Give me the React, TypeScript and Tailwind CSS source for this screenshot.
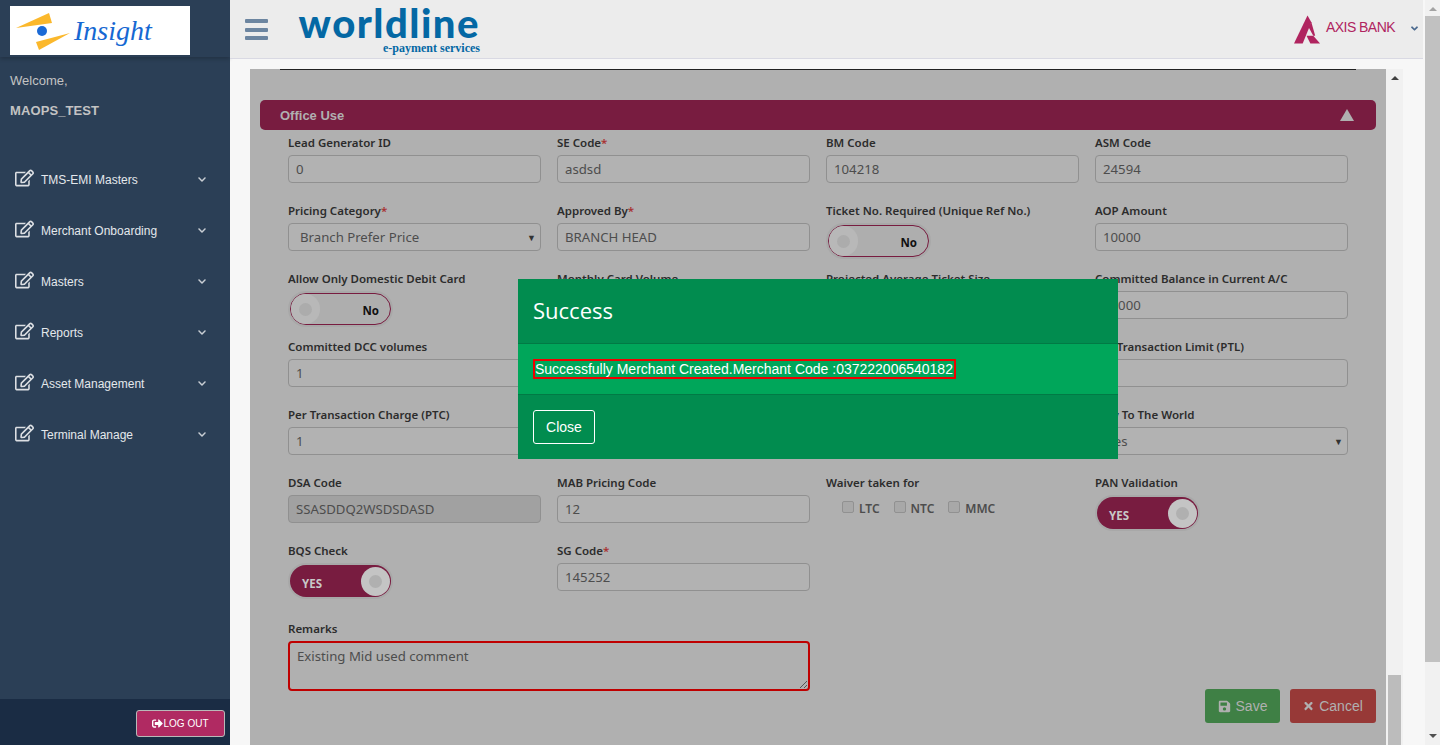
import { FaAngleDown, FaChevronDown, FaRegEdit, FaSave, FaSignOutAlt, FaTimes } from "react-icons/fa";

const navItems = ["TMS-EMI Masters", "Merchant Onboarding", "Masters", "Reports", "Asset Management", "Terminal Manage"];

function Label({ text, required }: { text: string; required?: boolean }) {
  return (
    <label className="block h-[18px] text-[11.5px] leading-[12px] font-semibold text-[#2c2c2c] whitespace-nowrap">
      {text}
      {required && <span className="text-[#a83232]">*</span>}
    </label>
  );
}

function Field({ label, value, required, disabled }: { label: string; value?: string; required?: boolean; disabled?: boolean }) {
  return (
    <div className="h-[68px]">
      <Label text={label} required={required} />
      <div
        className={`flex h-[28px] items-center rounded-[4px] border border-[#909090] px-[7px] pt-[1px] text-[13.2px] text-[#4d4d4d] ${disabled ? "bg-[#a1a1a1]" : "bg-[#b2b2b2]"}`}
      >
        {value}
      </div>
    </div>
  );
}

function SelectField({ label, value, required }: { label: string; value: string; required?: boolean }) {
  return (
    <div className="h-[68px]">
      <Label text={label} required={required} />
      <div className="flex h-[28px] items-center justify-between rounded-[4px] border border-[#909090] bg-[#b2b2b2] pt-[1px] pl-[11px] pr-[4px] text-[13.2px] text-[#4d4d4d]">
        <span>{value}</span>
        <span className="text-[9px] text-[#333]">▼</span>
      </div>
    </div>
  );
}

function Toggle({ on }: { on: boolean }) {
  return (
    <div className="inline-flex h-[36px] w-[105px] rounded-full bg-[#a8a8a8] p-[2px]">
      {on ? (
        <div className="flex h-full w-full items-center justify-between rounded-full bg-[#781c40] pl-[12px] pr-[1px]">
          <span className="mt-[5px] text-[11.5px] font-bold text-[#c8c8c8]">YES</span>
          <span className="flex h-[29px] w-[29px] items-center justify-center rounded-full bg-[#c4c4c4]">
            <span className="h-[13px] w-[13px] rounded-full bg-[#b0b0b0]" />
          </span>
        </div>
      ) : (
        <div className="flex h-full w-full items-center justify-between rounded-full border border-[#781c40] bg-[#aeaeae] pr-[11px]">
          <span className="flex h-[30px] w-[29px] items-center justify-center rounded-full bg-[#b8b8b8]">
            <span className="h-[13px] w-[13px] rounded-full bg-[#acacac]" />
          </span>
          <span className="mt-[3px] text-[11.5px] font-bold text-[#111]">No</span>
        </div>
      )}
    </div>
  );
}

function ToggleField({ label, on }: { label: string; on: boolean }) {
  return (
    <div className="h-[68px]">
      <Label text={label} />
      <Toggle on={on} />
    </div>
  );
}

function Waiver() {
  return (
    <div className="h-[68px]">
      <Label text="Waiver taken for" />
      <div className="flex items-center gap-[14px] pl-[16px] pt-[5px]">
        {["LTC", "NTC", "MMC"].map((c) => (
          <span key={c} className="flex items-center gap-[5px] text-[12px] font-semibold text-[#4d4d4d]">
            <span className="mb-[4px] h-[12px] w-[12px] rounded-[2px] border border-[#919191] bg-[#a8a8a8]" />
            {c}
          </span>
        ))}
      </div>
    </div>
  );
}

function Sidebar() {
  return (
    <aside className="flex h-full w-[230px] shrink-0 flex-col bg-[#2b3f56] font-['Liberation_Sans',sans-serif]">
      <div className="h-[57px] pl-[10px] pt-[6px] shadow-[0_2px_4px_rgba(0,0,0,0.2)]">
        <div className="flex h-[49px] w-[180px] items-center bg-white pl-[4px]">
          <svg width="60" height="49" viewBox="0 0 60 49">
            <path d="M2 22 L35 7 L38 17 Z" fill="#fbb82c" />
            <path d="M22 36 L56 27 L25 44 Z" fill="#fbb82c" />
            <circle cx="28" cy="25" r="5" fill="#1b6ad6" />
          </svg>
          <span className="font-['Liberation_Serif',serif] text-[28px] italic leading-none text-[#1668d2]">Insight</span>
        </div>
      </div>
      <div className="pl-[10px] pt-[16px] text-[13px] leading-[16px] text-[#c3c3c3]">Welcome,</div>
      <div className="pl-[10px] pt-[14px] text-[13px] leading-[16px] font-bold tracking-[0.1px] text-[#c3c3c3]">MAOPS_TEST</div>
      <nav className="flex flex-1 flex-col pt-[35px]">
        {navItems.map((item) => (
          <div key={item} className="flex h-[51px] items-center pl-[15px] pr-[23px] text-[12px] text-[#e4e8ec]">
            <FaRegEdit className="mb-[3px] h-[18px] w-[19px] text-[#dcdfe3]" />
            <span className="ml-[7px] flex-1">{item}</span>
            <FaChevronDown className="h-[9px] w-[10px] text-[#c9ced4]" />
          </div>
        ))}
      </nav>
      <div className="flex h-[46px] items-start justify-end bg-[#1a2c44] pr-[5px] pt-[11px]">
        <button className="flex h-[27px] w-[89px] items-center justify-center rounded-[3px] border border-[#b9b9b9] bg-[#b02a62] text-[10px] text-white">
          <FaSignOutAlt className="h-[11px] w-[11px]" />
          LOG OUT
        </button>
      </div>
    </aside>
  );
}

function Header() {
  return (
    <header className="flex h-[59px] shrink-0 items-start border-b border-[#d9d9e3] bg-[#ececec] font-['Liberation_Sans',sans-serif]">
      <div className="ml-[15px] mt-[19px] flex w-[23px] flex-col gap-[4.5px]">
        <span className="h-[4px] rounded-[1px] bg-[#6c85a0]" />
        <span className="h-[4px] rounded-[1px] bg-[#6c85a0]" />
        <span className="h-[4px] rounded-[1px] bg-[#6c85a0]" />
      </div>
      <div className="ml-[32px] flex w-[180px] flex-col items-end">
        <span className="mt-[4px] font-['Lato',sans-serif] text-[40px] font-black leading-[38px] tracking-[1.5px] text-[#0468a4]">worldline</span>
        <span className="font-['Liberation_Serif',serif] text-[12px] font-bold leading-[12px] text-[#0468a4]">e-payment services</span>
      </div>
      <div className="ml-auto mr-[4px] mt-[14px] flex items-center">
        <svg width="27" height="30" viewBox="0 0 28 30">
          <path d="M0 30 L14 1 L18 8 L9 30 Z" fill="#b0245f" />
          <path d="M13 22 L20 22 L27 30 L17 30 Z" fill="#b0245f" />
          <path d="M15 13 L18 8 L22 22 L20 22 Z" fill="#b0245f" />
        </svg>
        <span className="mb-[3px] ml-[5px] text-[14px] tracking-[-0.55px] text-[#b0245f]">AXIS BANK</span>
        <FaAngleDown className="mb-[2px] ml-[15px] h-[11px] w-[9px] text-[#4c6a8f]" />
      </div>
    </header>
  );
}

function Form() {
  return (
    <div className="relative min-w-0 flex-1 bg-[#b0b0b0] font-['Noto_Sans',sans-serif]">
      <div className="mx-[30px] h-[1px] bg-[#222]" />
      <div className="mx-[10px] mt-[30px] flex h-[30px] items-center justify-between rounded-[5px] bg-[#781c40] pl-[20px] pr-[22px]">
        <span className="mt-[1px] font-['Liberation_Sans',sans-serif] text-[13px] font-bold text-[#b0b0b0]">Office Use</span>
        <span className="h-0 w-0 border-x-[7px] border-b-[12px] border-x-transparent border-b-[#b0b0b0]" />
      </div>
      <div className="grid grid-cols-[253px_253px_253px_253px] gap-x-4 pl-[38px] pt-[7px]">
        <Field label="Lead Generator ID" value="0" />
        <Field label="SE Code" value="asdsd" required />
        <Field label="BM Code" value="104218" />
        <Field label="ASM Code" value="24594" />

        <SelectField label="Pricing Category" value="Branch Prefer Price" required />
        <Field label="Approved By" value="BRANCH HEAD" required />
        <ToggleField label="Ticket No. Required (Unique Ref No.)" on={false} />
        <Field label="AOP Amount" value="10000" />

        <ToggleField label="Allow Only Domestic Debit Card" on={false} />
        <Field label="Monthly Card Volume" />
        <Field label="Projected Average Ticket Size" />
        <Field label="Committed Balance in Current A/C" value="10000" />

        <Field label="Committed DCC volumes" value="1" />
        <Field label="" />
        <Field label="" />
        <Field label="Per Transaction Limit (PTL)" />

        <Field label="Per Transaction Charge (PTC)" value="1" />
        <Field label="" />
        <Field label="" />
        <SelectField label="Way To The World" value="Yes" />

        <Field label="DSA Code" value="SSASDDQ2WSDSDASD" disabled />
        <Field label="MAB Pricing Code" value="12" />
        <Waiver />
        <ToggleField label="PAN Validation" on />

        <ToggleField label="BQS Check" on />
        <Field label="SG Code" value="145252" required />
      </div>
      <div className="flex items-start pl-[38px] pr-[10px] pt-[10px]">
        <div className="w-[522px]">
          <Label text="Remarks" />
          <div className="relative h-[50px] rounded-[4px] border-2 border-[#bf0000] px-[7px] pt-[4px] text-[13.2px] text-[#4d4d4d]">
            Existing Mid used comment
            <svg className="absolute bottom-0 right-0" width="9" height="9" viewBox="0 0 9 9">
              <path d="M1 8 L8 1 M5 8 L8 5" stroke="#555" strokeWidth="1" />
            </svg>
          </div>
        </div>
        <div className="ml-auto mt-[66px] flex gap-[10px] font-['Liberation_Sans',sans-serif] text-[14px] text-[#b0b0b0]">
          <button className="flex h-[34px] w-[75px] items-center justify-center gap-[5px] rounded-[3px] bg-[#3f8045]">
            <FaSave className="h-[13px] w-[13px]" />
            Save
          </button>
          <button className="flex h-[34px] w-[86px] items-center justify-center gap-[5px] rounded-[3px] bg-[#973937]">
            <FaTimes className="h-[12px] w-[11px]" />
            Cancel
          </button>
        </div>
      </div>
      <div className="absolute left-[268px] top-[210px] h-[180px] w-[600px] bg-[#018c4f] text-white">
        <div className="flex h-[65px] items-center border-b border-[#017a45] pb-[2px] pl-[15px] font-['Open_Sans',sans-serif] text-[22px]">Success</div>
        <div className="flex h-[51px] items-center border-b border-[#017a45] bg-[#00a65a] pl-[15px] font-['Liberation_Sans',sans-serif] text-[14px]">
          <span className="border-2 border-[#f00000] pr-[1px] leading-[16px]">Successfully Merchant Created.Merchant Code :037222006540182</span>
        </div>
        <div className="pl-[15px] pt-[15px] font-['Liberation_Sans',sans-serif] text-[14px]">
          <button className="h-[34px] w-[62px] rounded-[3px] border border-white">Close</button>
        </div>
      </div>
    </div>
  );
}

export default function App() {
  return (
    <div className="flex h-[745px] w-[1440px] overflow-hidden bg-[#f7f7f7]">
      <Sidebar />
      <main className="flex min-w-0 flex-1 flex-col">
        <div className="flex h-full min-h-0">
          <div className="flex w-[1193px] shrink-0 flex-col">
            <Header />
            <div className="flex min-h-0 flex-1 pl-[20px] pr-[20px] pt-[10px]">
              <Form />
              <div className="flex w-[17px] shrink-0 flex-col items-center bg-[#f1f1f1] pt-[7px]">
                <span className="h-0 w-0 border-x-[4px] border-b-[4px] border-x-transparent border-b-[#404040]" />
                <span className="mt-auto h-[70px] w-[13px] bg-[#bcbcbc]" />
              </div>
            </div>
          </div>
          <div className="ml-auto flex w-[15px] shrink-0 flex-col items-center bg-[#f1f1f1] pt-[7px]">
            <span className="h-0 w-0 border-x-[4px] border-b-[4px] border-x-transparent border-b-[#a3a3a3]" />
            <span className="mt-[5px] h-[646px] w-full bg-[#c1c1c1]" />
            <span className="mt-auto mb-[7px] h-0 w-0 border-x-[4px] border-t-[4px] border-x-transparent border-t-[#505050]" />
          </div>
        </div>
      </main>
    </div>
  );
}
